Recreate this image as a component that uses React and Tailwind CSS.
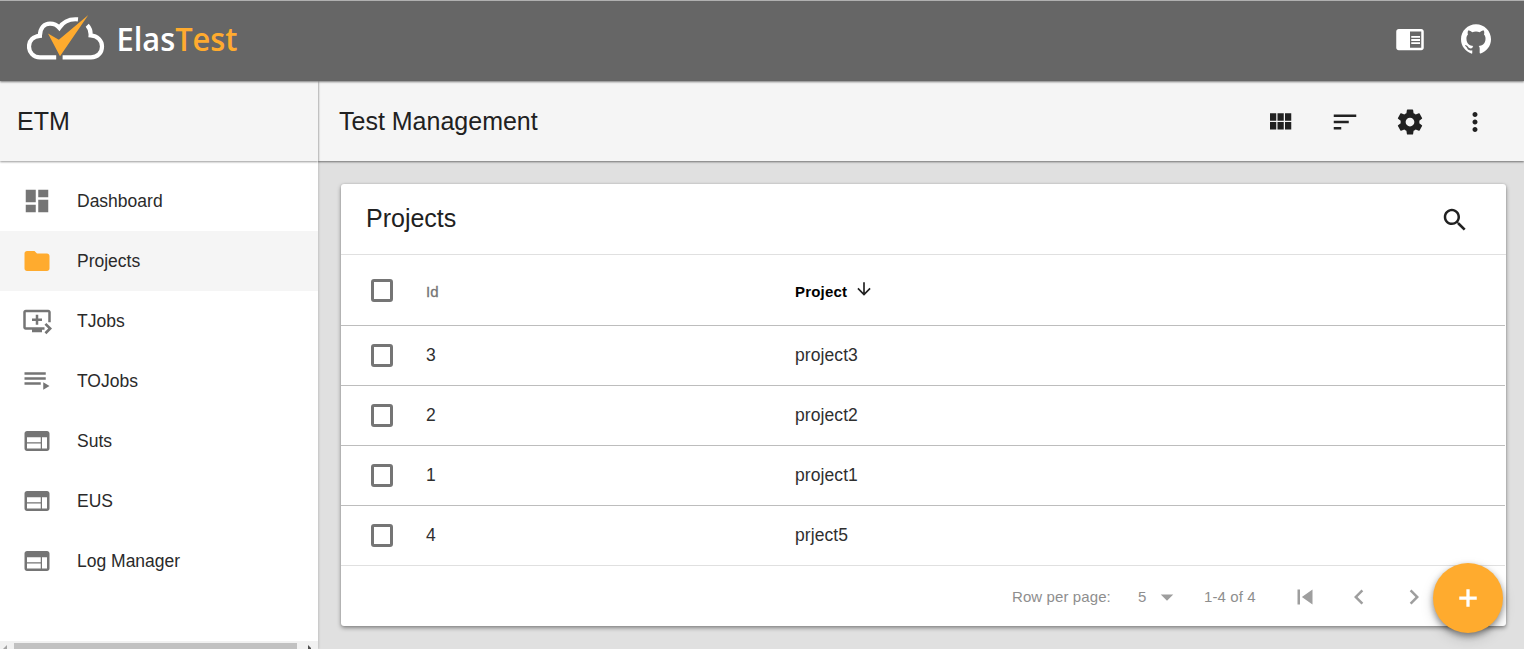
import React from 'react';

const ICONS = {
  dashboard: 'M3 13h8V3H3v10zm0 8h8v-6H3v6zm10 0h8V11h-8v10zm0-18v6h8V3h-8z',
  folder: 'M10 4H4c-1.1 0-1.99.9-1.99 2L2 18c0 1.1.9 2 2 2h16c1.1 0 2-.9 2-2V8c0-1.1-.9-2-2-2h-8l-2-2z',
  queue:
    'M21 3H3c-1.11 0-2 .89-2 2v12c0 1.1.89 2 2 2h5v2h8v-2h2v-2H3V5h18v8h2V5c0-1.11-.9-2-2-2zm-8 7V7h-2v3H8v2h3v3h2v-3h3v-2h-3zm11 8l-4.5 4.5L18 21l3-3-3-3 1.5-1.5L24 18z',
  playlist: 'M19 9H2v2h17V9zm0-4H2v2h17V5zM2 15h13v-2H2v2zm15-2v6l5-3-5-3z',
  web: 'M20 4H4c-1.1 0-1.99.9-1.99 2L2 18c0 1.1.9 2 2 2h16c1.1 0 2-.9 2-2V6c0-1.1-.9-2-2-2zm-5 14H4v-4h11v4zm0-5H4V9h11v4zm5 5h-4V9h4v9z',
  reader:
    'M13 12h7v1.5h-7zm0-2.5h7V11h-7zm0 5h7V16h-7zM21 4H3c-1.1 0-2 .9-2 2v13c0 1.1.9 2 2 2h18c1.1 0 2-.9 2-2V6c0-1.1-.9-2-2-2zm0 15h-9V6h9v13z',
  github:
    'M12 .297c-6.63 0-12 5.373-12 12 0 5.303 3.438 9.8 8.205 11.385.6.113.82-.258.82-.577 0-.285-.01-1.04-.015-2.04-3.338.724-4.042-1.61-4.042-1.61C4.422 18.07 3.633 17.7 3.633 17.7c-1.087-.744.084-.729.084-.729 1.205.084 1.838 1.236 1.838 1.236 1.07 1.835 2.809 1.305 3.495.998.108-.776.417-1.305.76-1.605-2.665-.3-5.466-1.332-5.466-5.93 0-1.31.465-2.38 1.235-3.22-.135-.303-.54-1.523.105-3.176 0 0 1.005-.322 3.3 1.23.96-.267 1.98-.399 3-.405 1.02.006 2.04.138 3 .405 2.28-1.552 3.285-1.23 3.285-1.23.645 1.653.24 2.873.12 3.176.765.84 1.23 1.91 1.23 3.22 0 4.61-2.805 5.625-5.475 5.92.42.36.81 1.096.81 2.22 0 1.606-.015 2.896-.015 3.286 0 .315.21.69.825.57C20.565 22.092 24 17.592 24 12.297c0-6.627-5.373-12-12-12',
  modules: 'M4 11h5V5H4v6zm0 7h5v-6H4v6zm6 0h5v-6h-5v6zm6 0h5v-6h-5v6zm-6-7h5V5h-5v6zm6-6v6h5V5h-5z',
  sort: 'M3 18h6v-2H3v2zM3 6v2h18V6H3zm0 7h12v-2H3v2z',
  settings:
    'M19.43 12.98c.04-.32.07-.64.07-.98s-.03-.66-.07-.98l2.11-1.65c.19-.15.24-.42.12-.64l-2-3.46c-.12-.22-.39-.3-.61-.22l-2.49 1c-.52-.4-1.08-.73-1.69-.98l-.38-2.65C14.46 2.18 14.25 2 14 2h-4c-.25 0-.46.18-.49.42l-.38 2.65c-.61.25-1.17.59-1.69.98l-2.49-1c-.23-.09-.49 0-.61.22l-2 3.46c-.13.22-.07.49.12.64l2.11 1.65c-.04.32-.07.65-.07.98s.03.66.07.98l-2.11 1.65c-.19.15-.24.42-.12.64l2 3.46c.12.22.39.3.61.22l2.49-1c.52.4 1.08.73 1.69.98l.38 2.65c.03.24.24.42.49.42h4c.25 0 .46-.18.49-.42l.38-2.65c.61-.25 1.17-.59 1.69-.98l2.49 1c.23.09.49 0 .61-.22l2-3.46c.12-.22.07-.49-.12-.64l-2.11-1.65zM12 15.5c-1.93 0-3.5-1.57-3.5-3.5s1.57-3.5 3.5-3.5 3.5 1.57 3.5 3.5-1.57 3.5-3.5 3.5z',
  more: 'M12 8c1.1 0 2-.9 2-2s-.9-2-2-2-2 .9-2 2 .9 2 2 2zm0 2c-1.1 0-2 .9-2 2s.9 2 2 2 2-.9 2-2-.9-2-2-2zm0 6c-1.1 0-2 .9-2 2s.9 2 2 2 2-.9 2-2-.9-2-2-2z',
  search:
    'M15.5 14h-.79l-.28-.27C15.41 12.59 16 11.11 16 9.5 16 5.91 13.09 3 9.5 3S3 5.91 3 9.5 5.91 16 9.5 16c1.61 0 3.09-.59 4.23-1.57l.27.28v.79l5 4.99L20.49 19l-4.99-5zm-6 0C7.01 14 5 11.99 5 9.5S7.01 5 9.5 5 14 7.01 14 9.5 11.99 14 9.5 14z',
  arrowDown: 'M20 12l-1.41-1.41L13 16.17V4h-2v12.17l-5.58-5.59L4 12l8 8 8-8z',
  dropDown: 'M7 10l5 5 5-5z',
  first: 'M6 6h2v12H6zm3.5 6l8.5 6V6z',
  left: 'M15.41 7.41L14 6l-6 6 6 6 1.41-1.41L10.83 12z',
  right: 'M10 6L8.59 7.41 13.17 12l-4.58 4.59L10 18l6-6z',
  add: 'M19 13.3h-5.7v5.7h-2.6v-5.7H5v-2.6h5.7V5h2.6v5.7H19v2.6z',
};

function Icon({ name, className = 'size-[30px]' }) {
  return (
    <svg viewBox="0 0 24 24" fill="currentColor" className={`shrink-0 ${className}`}>
      <path d={ICONS[name]} />
    </svg>
  );
}

function Logo() {
  return (
    <svg width="220" height="60" viewBox="0 0 220 60" className="shrink-0">
      <path
        d="M29.2 47.4H13C6.3 47.4 2 42.3 2 36.4C2 30.6 6.3 26.2 12.9 25.8C12.9 17.5 17.5 13.6 23 13.6C27 13.6 30 15 32.3 17.8C36 12 42.5 8.6 51 9.4M60.2 15.2C62.8 18 63.9 21.3 63.6 25.4C70.5 25.8 75 30.6 75 36.4C75 42.8 70.5 47.4 64 47.4H35.6"
        fill="none"
        stroke="#fff"
        strokeWidth="4.2"
      />
      <path d="M21 23.4L31.8 29.8L61.3 5L33 46.2Z" fill="#ffab2e" />
      <text
        x="89.5"
        y="40.5"
        textLength="121"
        lengthAdjust="spacingAndGlyphs"
        className="font-['Open_Sans',sans-serif] text-[32px] font-semibold"
        fill="#fff"
      >
        Elas<tspan fill="#ffab2e">Test</tspan>
      </text>
    </svg>
  );
}

const NAV = [
  ['Dashboard', 'dashboard'],
  ['Projects', 'folder'],
  ['TJobs', 'queue'],
  ['TOJobs', 'playlist'],
  ['Suts', 'web'],
  ['EUS', 'web'],
  ['Log Manager', 'web'],
];

const ROWS = [
  ['3', 'project3'],
  ['2', 'project2'],
  ['1', 'project1'],
  ['4', 'prject5'],
];

function Checkbox() {
  return <span className="block h-[23px] w-[22px] rounded-[3px] border-[3px] border-[#757575]" />;
}

function Sidebar() {
  return (
    <aside className="z-10 flex w-[318px] shrink-0 flex-col bg-white shadow-[1px_0_2px_rgba(0,0,0,0.14)]">
      <div className="z-10 flex h-[80px] shrink-0 items-center bg-[#f5f5f5] pt-[2px] pl-[17px] text-[25px] shadow-[0_1px_2px_rgba(0,0,0,0.4)]">
        ETM
      </div>
      <nav className="flex flex-1 flex-col pt-[10px]">
        {NAV.map(([label, icon]) => (
          <a
            key={label}
            className={`flex h-[60px] items-center pl-[22px] text-[17.5px] ${label === 'Projects' ? 'bg-[#f5f5f5]' : ''}`}
          >
            <span className={label === 'Projects' ? 'text-[#ffab2e]' : 'text-[#757575]'}>
              <Icon name={icon} />
            </span>
            <span className="pl-[25px] text-[#2a2a2a]">{label}</span>
          </a>
        ))}
      </nav>
      <div className="flex h-[8px] shrink-0 items-end justify-between bg-[#f1f1f1]">
        <svg width="8" height="4" viewBox="0 0 8 4" fill="#a3a3a3">
          <path d="M3 4L7 0V4Z" />
        </svg>
        <span className="ml-[6px] h-[6px] w-[283px] bg-[#c1c1c1]" />
        <svg width="21" height="4" viewBox="0 0 21 4" fill="#505050">
          <path d="M11 0L14 3V4H11Z" />
        </svg>
      </div>
    </aside>
  );
}

function ProjectsCard() {
  return (
    <section className="flex h-[442px] flex-col rounded-[3px] bg-white shadow-[0_2px_4px_rgba(0,0,0,0.4),0_0_2px_rgba(0,0,0,0.15)]">
      <div className="flex h-[71px] shrink-0 items-center justify-between border-b border-[#e0e0e0] pr-[36px] pl-[25px]">
        <h2 className="-mt-[2px] text-[25px] leading-[30px]">Projects</h2>
        <Icon name="search" className="mt-px size-[30px]" />
      </div>
      <div className="mr-px flex h-[71px] shrink-0 items-center border-b border-[#bdbdbd] pl-[30px] text-[15px] font-bold tracking-[0.2px]">
        <Checkbox />
        <span className="w-[369px] pt-[4px] pl-[33px] font-normal text-[#757575] [-webkit-text-stroke:0.3px_#757575]">Id</span>
        <span className="pt-[4px] pl-[33px] text-black">Project</span>
        <Icon name="arrowDown" className="mb-[2px] ml-[7px] size-5" />
      </div>
      {ROWS.map(([id, name]) => (
        <div
          key={id}
          className="mr-px flex h-[60px] shrink-0 items-center border-b border-[#bdbdbd] pl-[30px] text-[17.5px] text-[#2f2f2f] last-of-type:border-[#e0e0e0]"
        >
          <Checkbox />
          <span className="w-[369px] pl-[33px]">{id}</span>
          <span className="pl-[33px] tracking-[0.08px]">{name}</span>
        </div>
      ))}
      <footer className="flex h-[60px] items-center pt-[2px] pl-[671px] text-[15px] tracking-[0.1px] text-[#8e8e8e]">
        <span className="w-[126px]">Row per page:</span>
        <span className="w-[14px]">5</span>
        <span className="w-[52px] text-[#9e9e9e]">
          <Icon name="dropDown" />
        </span>
        <span className="w-[86px]">1-4 of 4</span>
        <span className="flex gap-[24.4px] text-[#9e9e9e]">
          <Icon name="first" />
          <Icon name="left" />
          <Icon name="right" />
        </span>
      </footer>
    </section>
  );
}

export default function App() {
  return (
    <div className="relative flex h-[649px] w-[1524px] flex-col overflow-hidden bg-[#e0e0e0] font-['Liberation_Sans',Arial,sans-serif] text-[#212121]">
      <header className="z-20 flex h-[81px] shrink-0 items-center justify-between border-t border-[#b0b0b0] bg-[#666] pr-[33px] pl-[27px] text-white shadow-[0_1px_2px_rgba(0,0,0,0.5)]">
        <div className="-mt-[2px]">
          <Logo />
        </div>
        <div className="-mt-[4px] flex gap-[36px]">
          <Icon name="reader" />
          <Icon name="github" />
        </div>
      </header>
      <div className="flex min-h-0 flex-1">
        <Sidebar />
        <main className="flex min-w-0 flex-1 flex-col">
          <div className="flex h-[80px] shrink-0 items-center justify-between bg-[#f5f5f5] pr-[34px] pl-[21px] shadow-[0_1px_2px_rgba(0,0,0,0.5)]">
            <h1 className="pt-[2px] text-[25px]">Test Management</h1>
            <div className="flex gap-[35px] pt-[2px]">
              <Icon name="modules" />
              <Icon name="sort" />
              <Icon name="settings" />
              <Icon name="more" />
            </div>
          </div>
          <div className="pt-[23px] pr-[18px] pl-[23px]">
            <ProjectsCard />
          </div>
        </main>
      </div>
      <button className="absolute top-[563px] left-[1433px] z-30 flex size-[70px] items-center justify-center rounded-full bg-[#ffab2e] text-white shadow-[0_3px_6px_rgba(0,0,0,0.4),0_6px_14px_rgba(0,0,0,0.15)]">
        <Icon name="add" />
      </button>
    </div>
  );
}
